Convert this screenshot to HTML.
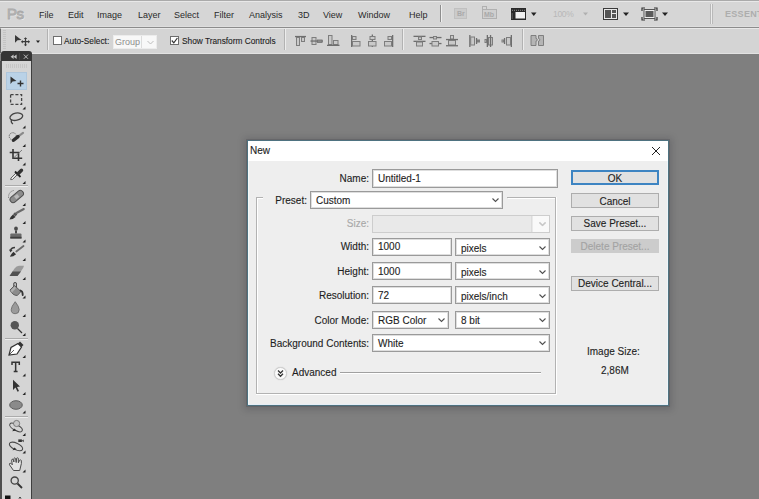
<!DOCTYPE html>
<html><head><meta charset="utf-8">
<style>
*{margin:0;padding:0;box-sizing:border-box}
html,body{width:759px;height:499px;overflow:hidden;background:#7f7f7f;font-family:"Liberation Sans",sans-serif;position:relative}
.a{position:absolute}
.t{position:absolute;white-space:pre;line-height:1}
#menubar{left:0;top:0;width:759px;height:27px;background:#d6d6d6;border-top:1px solid #e9e9e9;border-bottom:1px solid #a0a0a0}
#optbar{left:0;top:27px;width:759px;height:24px;background:#d4d4d4;border-top:1px solid #e6e6e6;border-left:1px solid #8a8a8a}
.menu{font-size:9px;color:#2a2a2a;top:11px}
.dlgtxt{font-size:10px;color:#1e1e1e;-webkit-text-stroke:0.12px currentColor;transform:scaleY(1.1);transform-origin:0 0}
.field{position:absolute;background:#fff;border:1px solid #9a9a9a;box-shadow:inset 0 0 0 1px #dedede}
.sel{position:absolute;background:#fff;border:1px solid #9a9a9a;box-shadow:inset 0 0 0 1px #dedede}
.btn{position:absolute;background:#e1e1e1;border:1px solid #adadad;font-size:9.7px;color:#1a1a1a;text-align:center}
</style></head><body>

<!-- Menu bar -->
<div class="a" style="left:0;top:0;width:759px;height:28px;background:#d6d6d6;border-top:1px solid #aaaaaa;border-bottom:1px solid #8c8c8c"></div>
<div class="a" style="left:0;top:1px;width:759px;height:1px;background:#e8e8e8"></div>
<div class="a" style="left:0;top:26px;width:759px;height:1px;background:#dedede"></div>
<div class="t" style="left:7px;top:6px;font-size:15px;color:#c4c4c4;-webkit-text-stroke:0.9px #a9a9a9;text-shadow:1px 1px 0 #e8e8e8;letter-spacing:-0.5px">Ps</div>
<div class="t menu" style="left:39px">File</div>
<div class="t menu" style="left:68px">Edit</div>
<div class="t menu" style="left:97px">Image</div>
<div class="t menu" style="left:138px">Layer</div>
<div class="t menu" style="left:174px">Select</div>
<div class="t menu" style="left:214px">Filter</div>
<div class="t menu" style="left:249px">Analysis</div>
<div class="t menu" style="left:298px">3D</div>
<div class="t menu" style="left:323px">View</div>
<div class="t menu" style="left:358px">Window</div>
<div class="t menu" style="left:409px">Help</div>
<div class="a" style="left:440px;top:5px;width:1px;height:17px;background:#8e8e8e"></div>
<div class="a" style="left:441px;top:5px;width:1px;height:17px;background:#efefef"></div>
<!-- Br -->
<div class="a" style="left:454px;top:8px;width:13px;height:11px;background:#cbcbcb;border:1px solid #c0c0c0"></div>
<div class="t" style="left:457px;top:10px;font-size:7px;font-weight:bold;color:#a9a9a9">Br</div>
<!-- Mb -->
<div class="a" style="left:482px;top:9px;width:15px;height:10px;background:#cfcfcf;border:1px solid #b0b0b0"></div>
<div class="a" style="left:482px;top:6px;width:5px;height:4px;border:1px solid #b0b0b0;border-bottom:none"></div>
<div class="t" style="left:484px;top:11px;font-size:7px;font-weight:bold;color:#a9a9a9">Mb</div>
<!-- screen mode -->
<svg class="a" style="left:510px;top:7px" width="17" height="14">
<rect x="1" y="1" width="15" height="12" fill="#2a2a2a"/>
<rect x="5.5" y="5" width="9.5" height="6.5" fill="#f2f2f2"/>
<path d="M2 3.3 H15.5 M2.2 6.5 V11.5" stroke="#9a9a9a" stroke-width="0.9" stroke-dasharray="1 1"/>
</svg>
<svg class="a" style="left:0;top:0" width="759" height="28">
<path d="M531 12.5 h5.5 l-2.75 3.5z" fill="#222"/>
<path d="M583 12.5 h5 l-2.5 3z" fill="#b0b0b0"/>
<path d="M623 12.5 h6 l-3 3.5z" fill="#222"/>
<path d="M662 12.5 h6 l-3 3.5z" fill="#222"/>
</svg>
<div class="t" style="left:553px;top:10px;font-size:8.5px;color:#b8b8b8;letter-spacing:-0.3px">100%</div>
<!-- arrange docs -->
<div class="a" style="left:603px;top:8px;width:15px;height:12px;background:#e8e8e8;border:1px solid #3a3a3a"></div>
<div class="a" style="left:605px;top:10px;width:6px;height:8px;background:#555"></div>
<div class="a" style="left:612px;top:10px;width:4px;height:3px;background:#555"></div>
<div class="a" style="left:612px;top:14px;width:4px;height:4px;background:#555"></div>
<!-- screen -->
<svg class="a" style="left:641px;top:7px" width="17" height="14">
<rect x="3" y="2.5" width="11" height="9" fill="#ededed" stroke="#555" stroke-width="1"/>
<rect x="4.5" y="4" width="8" height="6" fill="#5a5a5a"/>
<path d="M1 4 V1 H4 M13 1 H16 V4 M16 10 V13 H13 M4 13 H1 V10" fill="none" stroke="#333" stroke-width="1.2"/>
</svg>
<div class="a" style="left:710px;top:4px;width:1px;height:20px;background:#b9b9b9"></div>
<div class="a" style="left:712px;top:4px;width:1px;height:20px;background:#b9b9b9"></div>
<div class="a" style="left:711px;top:4px;width:1px;height:20px;background:#ececec"></div>
<div class="t" style="left:725px;top:10px;font-size:9px;font-weight:bold;color:#adadad;letter-spacing:0.3px">ESSENTIALS</div>

<!-- Options bar -->
<div class="a" style="left:0;top:28px;width:759px;height:26px;background:#d4d4d4;border-top:1px solid #e8e8e8;border-left:1px solid #6a6a6a;border-bottom:1px solid #e2e2e2"></div>
<div class="a" style="left:3px;top:30px;width:3px;height:20px;background:repeating-linear-gradient(#c4c4c4 0 1px,transparent 1px 2px)"></div>
<svg class="a" style="left:0;top:28px" width="759" height="23">
<path d="M15 7 L21.5 12 L17.5 12.3 L15 14.8z" fill="#3a3a3a"/>
<path d="M25.5 10 v7.5 M21.8 13.7 h7.4" stroke="#3a3a3a" stroke-width="1.2"/>
<path d="M23.8 11 l1.7 -1.8 l1.7 1.8z M23.8 16.4 l1.7 1.8 l1.7 -1.8z M22.8 12 l-1.8 1.7 l1.8 1.7z M28.2 12 l1.8 1.7 l-1.8 1.7z" fill="#3a3a3a"/>
<path d="M36 12.5 h4 l-2 2.5z" fill="#222"/>
<!-- align icons -->
<rect x="295" y="7.9" width="11" height="1.3" fill="#6e6e6e"/>
<rect x="296.5" y="9.5" width="3" height="8" fill="#c9c9c9" stroke="#7d7d7d" stroke-width="1"/>
<rect x="301.5" y="9.5" width="3" height="4" fill="#c9c9c9" stroke="#7d7d7d" stroke-width="1"/>
<rect x="312.0" y="9.5" width="4.0" height="7" fill="#c9c9c9" stroke="#7d7d7d" stroke-width="1"/>
<rect x="317.5" y="12.0" width="4.5" height="2.5" fill="#c9c9c9" stroke="#7d7d7d" stroke-width="1"/>
<rect x="310.5" y="12.4" width="12.5" height="1.3" fill="#6e6e6e"/>
<rect x="328.5" y="7.5" width="3.5" height="9" fill="#c9c9c9" stroke="#7d7d7d" stroke-width="1"/>
<rect x="333.5" y="12.5" width="4.5" height="4" fill="#c9c9c9" stroke="#7d7d7d" stroke-width="1"/>
<rect x="327" y="16.699999999999996" width="12.5" height="1.3" fill="#6e6e6e"/>
<rect x="351.0" y="7" width="1.3" height="12" fill="#6e6e6e"/>
<rect x="352.5" y="8.5" width="3.5" height="3" fill="#c9c9c9" stroke="#7d7d7d" stroke-width="1"/>
<rect x="352.5" y="13.5" width="7.5" height="4.5" fill="#c9c9c9" stroke="#7d7d7d" stroke-width="1"/>
<rect x="371.7" y="6.5" width="1.3" height="12.5" fill="#6e6e6e"/>
<rect x="370.0" y="8.5" width="5.0" height="3" fill="#c9c9c9" stroke="#7d7d7d" stroke-width="1"/>
<rect x="368.5" y="13.5" width="7.5" height="4.5" fill="#c9c9c9" stroke="#7d7d7d" stroke-width="1"/>
<rect x="392.0" y="7" width="1.3" height="12" fill="#6e6e6e"/>
<rect x="388.0" y="8.5" width="3.5" height="3" fill="#c9c9c9" stroke="#7d7d7d" stroke-width="1"/>
<rect x="384.5" y="13.5" width="7" height="4.5" fill="#c9c9c9" stroke="#7d7d7d" stroke-width="1"/>
<rect x="413.5" y="7.6999999999999975" width="12.0" height="1.3" fill="#6e6e6e"/>
<rect x="418.5" y="9.0" width="3" height="2.5" fill="#c9c9c9" stroke="#7d7d7d" stroke-width="1"/>
<rect x="413.5" y="12.699999999999998" width="12.0" height="1.3" fill="#6e6e6e"/>
<rect x="416.5" y="14.0" width="6" height="4.0" fill="#c9c9c9" stroke="#7d7d7d" stroke-width="1"/>
<rect x="429.5" y="8.9" width="12.0" height="1.3" fill="#6e6e6e"/>
<rect x="433.5" y="8.5" width="3" height="2.5" fill="#c9c9c9" stroke="#7d7d7d" stroke-width="1"/>
<rect x="429.5" y="14.9" width="12.0" height="1.3" fill="#6e6e6e"/>
<rect x="432.0" y="13.5" width="6.5" height="4.5" fill="#c9c9c9" stroke="#7d7d7d" stroke-width="1"/>
<rect x="450.5" y="7.5" width="3" height="3.5" fill="#c9c9c9" stroke="#7d7d7d" stroke-width="1"/>
<rect x="446" y="10.9" width="12" height="1.3" fill="#6e6e6e"/>
<rect x="448.5" y="12.5" width="7" height="4.5" fill="#c9c9c9" stroke="#7d7d7d" stroke-width="1"/>
<rect x="446" y="17.1" width="12" height="1.3" fill="#6e6e6e"/>
<rect x="469.2" y="7" width="1.3" height="12" fill="#6e6e6e"/>
<rect x="470.7" y="9.0" width="3.8000000000000114" height="8.0" fill="#c9c9c9" stroke="#7d7d7d" stroke-width="1"/>
<rect x="475.9" y="10" width="1.3" height="6" fill="#6e6e6e"/>
<rect x="477.5" y="12.0" width="2" height="2.0" fill="#c9c9c9" stroke="#7d7d7d" stroke-width="1"/>
<rect x="486.7" y="7" width="1.3" height="12" fill="#6e6e6e"/>
<rect x="485.0" y="11.5" width="1.5" height="3" fill="#c9c9c9" stroke="#7d7d7d" stroke-width="1"/>
<rect x="488.5" y="9.5" width="4" height="7.5" fill="#c9c9c9" stroke="#7d7d7d" stroke-width="1"/>
<rect x="489.9" y="7" width="1.3" height="12" fill="#6e6e6e"/>
<rect x="510.7" y="7" width="1.3" height="12" fill="#6e6e6e"/>
<rect x="506.5" y="9.5" width="4" height="7.5" fill="#c9c9c9" stroke="#7d7d7d" stroke-width="1"/>
<rect x="503.9" y="10" width="1.3" height="6" fill="#6e6e6e"/>
<rect x="502.0" y="12.0" width="1.5" height="2.0" fill="#c9c9c9" stroke="#7d7d7d" stroke-width="1"/>
<path d="M531 7.5 h5 v3 a1.3 1.3 0 0 1 0 2.6 v4.4 h-5z M538.5 7.5 h5 v10 h-5 v-4.4 a1.3 1.3 0 0 0 0 -2.6z" fill="#b5b5b5" stroke="#777" stroke-width="0.9"/>
</svg>
<div class="a" style="left:47px;top:29px;width:1px;height:21px;background:#b2b2b2"></div>
<div class="a" style="left:48px;top:29px;width:1px;height:21px;background:#ececec"></div>
<div class="a" style="left:284px;top:29px;width:1px;height:21px;background:#b2b2b2"></div>
<div class="a" style="left:285px;top:29px;width:1px;height:21px;background:#ececec"></div>
<div class="a" style="left:402px;top:29px;width:1px;height:21px;background:#b2b2b2"></div>
<div class="a" style="left:403px;top:29px;width:1px;height:21px;background:#ececec"></div>
<div class="a" style="left:522px;top:29px;width:1px;height:21px;background:#b2b2b2"></div>
<div class="a" style="left:523px;top:29px;width:1px;height:21px;background:#ececec"></div>
<!-- checkbox 1 -->
<div class="a" style="left:53px;top:36px;width:9px;height:9px;background:#fff;border:1px solid #6e6e6e"></div>
<div class="t" style="left:64px;top:36px;font-size:8.3px;color:#1e1e1e;transform:scaleY(1.12);transform-origin:0 0;-webkit-text-stroke:0.1px currentColor">Auto-Select:</div>
<div class="a" style="left:113px;top:35px;width:44px;height:14px;background:#f8f8f8;border:1px solid #ececec"></div>
<div class="a" style="left:141px;top:36px;width:1px;height:12px;background:#dcdcdc"></div>
<div class="t" style="left:115px;top:37.5px;font-size:9px;color:#8c8c8c;letter-spacing:0px">Group</div>
<svg class="a" style="left:145px;top:38px" width="10" height="8"><path d="M2.5 3 l3 3 l3 -3" fill="none" stroke="#bdbdbd" stroke-width="1"/></svg>
<!-- checkbox 2 -->
<div class="a" style="left:170px;top:36px;width:9px;height:9px;background:#fff;border:1px solid #6e6e6e"></div>
<svg class="a" style="left:170px;top:36px" width="9" height="9"><path d="M1.8 4.5 l2 2.3 l3.6 -4.8" fill="none" stroke="#333" stroke-width="1.2"/></svg>
<div class="t" style="left:182px;top:36px;font-size:8.3px;color:#1e1e1e;transform:scaleY(1.12);transform-origin:0 0;-webkit-text-stroke:0.1px currentColor">Show Transform Controls</div>

<!-- toolbox -->
<div class="a" style="left:1px;top:51px;width:31px;height:10px;background:#353535;border-radius:3px 3px 0 0"></div>
<div class="a" style="left:0;top:61px;width:32px;height:438px;background:#d5d5d5;border-left:2px solid #4e4e4e;border-right:1px solid #3e3e3e"></div>
<div class="a" style="left:6px;top:64px;width:22px;height:4px;background:repeating-linear-gradient(90deg,#c6c6c6 0 1px,transparent 1px 2px)"></div>
<div class="a" style="left:6px;top:72px;width:21px;height:18px;background:#bad2e7;box-shadow:inset 0 0 0 1px #aec6dc"></div>
<svg class="a" style="left:0;top:48px" width="32" height="20">
<path d="M13.6 6.5 l-3 2.2 l3 2.2z M16.6 6.5 l-3 2.2 l3 2.2z" fill="#c4c4c4"/>
<path d="M23.8 6.6 l4.2 4.2 M28 6.6 l-4.2 4.2" stroke="#bdbdbd" stroke-width="1"/>
<rect x="19" y="5" width="1" height="7" fill="#444"/>
</svg>
<svg class="a" style="left:0;top:0" width="32" height="499">
<g fill="#222"><path d="M22.5 109.5 L25.5 106.5 L25.5 109.5z"/><path d="M22.5 128.5 L25.5 125.5 L25.5 128.5z"/><path d="M22.5 147.0 L25.5 144.0 L25.5 147.0z"/><path d="M22.5 165.5 L25.5 162.5 L25.5 165.5z"/><path d="M22.5 184.0 L25.5 181.0 L25.5 184.0z"/><path d="M22.5 206.0 L25.5 203.0 L25.5 206.0z"/><path d="M22.5 224.0 L25.5 221.0 L25.5 224.0z"/><path d="M22.5 242.5 L25.5 239.5 L25.5 242.5z"/><path d="M22.5 261.0 L25.5 258.0 L25.5 261.0z"/><path d="M22.5 280.0 L25.5 277.0 L25.5 280.0z"/><path d="M22.5 298.5 L25.5 295.5 L25.5 298.5z"/><path d="M22.5 317.0 L25.5 314.0 L25.5 317.0z"/><path d="M22.5 336.0 L25.5 333.0 L25.5 336.0z"/><path d="M22.5 358.0 L25.5 355.0 L25.5 358.0z"/><path d="M22.5 376.5 L25.5 373.5 L25.5 376.5z"/><path d="M22.5 395.0 L25.5 392.0 L25.5 395.0z"/><path d="M22.5 413.5 L25.5 410.5 L25.5 413.5z"/><path d="M22.5 436.0 L25.5 433.0 L25.5 436.0z"/><path d="M22.5 453.5 L25.5 450.5 L25.5 453.5z"/><path d="M22.5 472.5 L25.5 469.5 L25.5 472.5z"/></g>
<!-- move -->
<path d="M10.5 76.5 L16.5 81 L12.5 81.5 L10.5 84z" fill="#333"/>
<path d="M20.5 80.5 v6 M17.5 83.5 h6" stroke="#333" stroke-width="1.4"/>
<!-- marquee -->
<rect x="10.6" y="94.6" width="11" height="9.8" fill="none" stroke="#444" stroke-width="1.3" stroke-dasharray="3 1.8"/>
<!-- lasso -->
<ellipse cx="16.3" cy="116.7" rx="6.5" ry="3.6" transform="rotate(-12 16.3 116.7)" fill="none" stroke="#444" stroke-width="1.3"/>
<path d="M11.5 119.5 q-1 3 1.5 4.5" fill="none" stroke="#444" stroke-width="1.3"/>
<!-- quick selection -->
<circle cx="12.8" cy="136.3" r="3.6" fill="none" stroke="#666" stroke-width="1" stroke-dasharray="1.4 0.9"/>
<path d="M17.5 137 L23 132.8" stroke="#8a8a8a" stroke-width="2.2" stroke-linecap="round"/>
<path d="M13.5 140.3 L18 136.6" stroke="#2e2e2e" stroke-width="3.4" stroke-linecap="round"/>
<!-- crop -->
<path d="M9.7 152.5 H18.5 V161 M13 149 V158.3 H22.2" fill="none" stroke="#333" stroke-width="1.6"/>
<path d="M13.5 158 L22 150" stroke="#666" stroke-width="0.8"/>
<!-- eyedropper -->
<path d="M10.6 179.6 L11 178 L16.5 172.5 L18 174 L12.5 179.5z" fill="#e6e6e6" stroke="#555" stroke-width="0.9"/>
<path d="M15 171.5 L20.5 177" stroke="#222" stroke-width="1.8"/>
<path d="M18 173.8 L21.5 170.3" stroke="#333" stroke-width="3.4" stroke-linecap="round"/>
<!-- separator -->
<rect x="5" y="185" width="23" height="1" fill="#ababab"/><rect x="5" y="186" width="23" height="1" fill="#eeeeee"/>
<!-- healing -->
<path d="M8.6 198 q-0.5 -6 5 -7.5" fill="none" stroke="#666" stroke-width="0.9" stroke-dasharray="1.2 1"/>
<rect x="9" y="193.5" width="15.5" height="6.2" rx="3.1" transform="rotate(-40 16.7 196.6)" fill="#8c8c8c" stroke="#4e4e4e" stroke-width="1"/>
<rect x="14.7" y="194.8" width="4" height="3.6" transform="rotate(-40 16.7 196.6)" fill="#b9b9b9"/>
<!-- brush -->
<path d="M9.5 219.5 q1 -3 3.5 -5 l2.5 2.5 q-2.5 2.5 -6 2.5z" fill="#333"/>
<path d="M13 214.3 l2 -2 l2.3 2.3 l-2 2z" fill="#555"/>
<path d="M16.5 213 L23.8 209" stroke="#6a6a6a" stroke-width="2" stroke-linecap="round"/>
<!-- stamp -->
<ellipse cx="16" cy="228.7" rx="1.9" ry="2.1" fill="#4a4a4a"/>
<rect x="15" y="230.5" width="2" height="3" fill="#4a4a4a"/>
<path d="M10.3 238.5 V234.5 q0 -1 1 -1 H20.5 q1 0 1 1 V238.5z" fill="#6a6a6a"/>
<rect x="10.3" y="236.8" width="11.2" height="1.7" fill="#3e3e3e"/>
<!-- history brush -->
<path d="M10 256.8 q1 -3 3.5 -5 l2.5 2.5 q-2.5 2.5 -6 2.5z" fill="#333"/>
<path d="M16.3 251.5 L23.5 246" stroke="#6a6a6a" stroke-width="1.8" stroke-linecap="round"/>
<path d="M10.5 251 q0.5 -3.5 4.5 -3.5" fill="none" stroke="#3a3a3a" stroke-width="1.5"/>
<path d="M9 249.5 l1.5 3 l2 -2.5z" fill="#3a3a3a"/>
<!-- eraser -->
<path d="M9.6 276 L14.5 268.5 Q16.5 265.8 19 265.8 L24 265.8 Q23.5 268 21.5 270.5 L17.5 276z" fill="#9a9a9a"/>
<path d="M9.6 276 L12.5 271.5 L21 271.5 L17.5 276z" fill="#505050"/>
<!-- bucket -->
<path d="M13.8 288 V283.5 q1.2 -2 2.6 0 V288" fill="none" stroke="#4a4a4a" stroke-width="1.1"/>
<path d="M10 290 L14.5 285.5 L21 291.5 L17.3 295.5 Q12.5 295.5 10 290z" fill="#8c8c8c" stroke="#555" stroke-width="0.9"/>
<path d="M10.5 290.5 L14.5 286.5 L16 288 L12 292.5z" fill="#b0b0b0"/>
<path d="M20.5 290.5 q2.4 0.8 2.2 4.5" fill="none" stroke="#333" stroke-width="1.8" stroke-linecap="round"/>
<!-- blur -->
<path d="M15.2 301.7 q-4 5 -4 8 a4 4 0 0 0 8 0 q0 -3 -4 -8z" fill="#9a9a9a" stroke="#666" stroke-width="0.8"/>
<!-- dodge -->
<circle cx="14.8" cy="325.3" r="4.2" fill="#555"/>
<path d="M17.5 328.5 L22 333" stroke="#333" stroke-width="1.3"/>
<!-- separator -->
<rect x="5" y="338" width="23" height="1" fill="#ababab"/><rect x="5" y="339" width="23" height="1" fill="#eeeeee"/>
<!-- pen -->
<path d="M9 355 L11 347.5 L18 343.5 L21.5 347 L17 354z" fill="#fff" stroke="#333" stroke-width="1.2"/>
<path d="M18 343.5 L20 341.5 L23.5 345 L21.5 347z" fill="#333"/>
<path d="M9 355 L14 350" stroke="#333" stroke-width="0.8"/>
<!-- T -->
<path d="M12 365 V362.3 H19.3 V365 M15.65 362.3 V371.5 M13.7 371.5 H17.6" fill="none" stroke="#333" stroke-width="1.5"/>
<!-- arrow -->
<path d="M13 379.7 L20 386.5 L17 387 L19 391 L17.5 391.7 L15.5 387.6 L13 390z" fill="#333"/>
<!-- ellipse -->
<ellipse cx="16" cy="405" rx="6.3" ry="4.3" fill="#8a8a8a" stroke="#555" stroke-width="0.9"/>
<!-- separator -->
<rect x="5" y="416" width="23" height="1" fill="#ababab"/><rect x="5" y="417" width="23" height="1" fill="#eeeeee"/>
<!-- 3d rotate -->
<ellipse cx="16" cy="427.5" rx="7" ry="2.9" transform="rotate(28 16 427.5)" fill="none" stroke="#4a4a4a" stroke-width="1.05"/>
<circle cx="16.6" cy="423.5" r="3.1" fill="#c6c6c6" stroke="#666" stroke-width="0.8"/>
<path d="M12.2 431.2 L16.5 430.6 L14.2 428.5z" fill="#2e2e2e"/>
<!-- 3d camera -->
<rect x="18.3" y="439.4" width="3.6" height="2.6" fill="#333"/><path d="M21.8 440.7 l1.9 -1.3 v2.8z" fill="#333"/>
<ellipse cx="16" cy="446.4" rx="7.2" ry="3.3" transform="rotate(25 16 446.4)" fill="none" stroke="#4a4a4a" stroke-width="1.05"/>
<path d="M12.5 450.2 L16.8 449.6 L14.4 447.6z" fill="#2e2e2e"/>
<!-- hand -->
<path d="M13.5 470.5 L9.5 464.8 Q9 463 10.7 463.2 L12.3 464.8 L11.6 460.2 Q11.9 458.8 13 459.2 L13.9 462 L13.9 458.5 Q14.7 457.2 15.6 458.5 L16.2 462.5 L16.6 458.3 Q17.4 457.3 18.3 458.3 L18.4 462.8 L19.5 460.3 Q20.4 459.4 21.3 460.4 L21.4 463.5 L19.7 470.5 Z" fill="#e2e2e2" stroke="#4a4a4a" stroke-width="1"/>
<!-- zoom -->
<circle cx="14.7" cy="480.6" r="3.6" fill="none" stroke="#444" stroke-width="1.3"/>
<path d="M17.5 483.5 L22 488" stroke="#333" stroke-width="1.8"/>
<!-- colors -->
<rect x="5" y="495.5" width="5.5" height="4" fill="#111"/>
<path d="M20 497 v3 M20 497 l-1.3 1.3 M20 497 l1.3 1.3" stroke="#444" stroke-width="0.9"/>
</svg>

<!-- Dialog -->
<div class="a" style="left:247px;top:140px;width:422px;height:266px;background:#eeeeee;border:1px solid #4e7280;box-shadow:0 0 0 1px rgba(60,60,70,0.22),0 1px 7px 3px rgba(20,20,30,0.17)"></div>
<div class="a" style="left:248px;top:141px;width:1px;height:264px;background:#f2f9fa"></div>
<div class="a" style="left:667px;top:141px;width:1px;height:264px;background:#eef6fa"></div>
<div class="a" style="left:248px;top:404px;width:420px;height:1px;background:#e6eef6"></div>
<div class="a" style="left:248px;top:141px;width:420px;height:20px;background:#fff"></div>
<div class="t dlgtxt" style="left:250px;top:145px">New</div>

<div class="t dlgtxt" style="right:390px;top:173px">Name:</div>
<div class="field" style="left:372px;top:169px;width:186px;height:19px"></div>
<div class="t dlgtxt" style="left:378px;top:173px">Untitled-1</div>

<div class="t dlgtxt" style="right:452px;top:195px">Preset:</div>
<div class="sel" style="left:310px;top:191px;width:193px;height:18px"></div>
<div class="t dlgtxt" style="left:316px;top:195px">Custom</div>

<div class="t dlgtxt" style="right:390px;top:218px;color:#a8a8a8">Size:</div>
<div class="a" style="left:372px;top:215px;width:178px;height:18px;background:#e9e9e9;border:1px solid #cdcdcd"></div>
<div class="a" style="left:531px;top:216px;width:1px;height:16px;background:#dcdcdc"></div>
<div class="a" style="left:533px;top:216px;width:16px;height:16px;background:#f9f9f9"></div>
<svg class="a" style="left:533px;top:216px" width="16" height="16"><path d="M6.5 6.5 l3 3 l3 -3" fill="none" stroke="#c4c4c4" stroke-width="1.1"/></svg>

<div class="t dlgtxt" style="right:390px;top:241px">Width:</div>
<div class="field" style="left:372px;top:238px;width:80px;height:18px"></div>
<div class="t dlgtxt" style="left:378px;top:241px">1000</div>
<div class="sel" style="left:455px;top:238px;width:95px;height:18px"></div>
<div class="t dlgtxt" style="left:461px;top:243px">pixels</div>

<div class="t dlgtxt" style="right:390px;top:266px">Height:</div>
<div class="field" style="left:372px;top:262px;width:80px;height:18px"></div>
<div class="t dlgtxt" style="left:378px;top:266px">1000</div>
<div class="sel" style="left:455px;top:262px;width:95px;height:18px"></div>
<div class="t dlgtxt" style="left:461px;top:267px">pixels</div>

<div class="t dlgtxt" style="right:390px;top:290px">Resolution:</div>
<div class="field" style="left:372px;top:286px;width:80px;height:18px"></div>
<div class="t dlgtxt" style="left:378px;top:290px">72</div>
<div class="sel" style="left:455px;top:286px;width:95px;height:18px"></div>
<div class="t dlgtxt" style="left:461px;top:291px">pixels/inch</div>

<div class="t dlgtxt" style="right:390px;top:315px">Color Mode:</div>
<div class="sel" style="left:372px;top:311px;width:77px;height:18px"></div>
<div class="t dlgtxt" style="left:378px;top:315px">RGB Color</div>
<div class="sel" style="left:455px;top:311px;width:95px;height:18px"></div>
<div class="t dlgtxt" style="left:461px;top:315px">8 bit</div>

<div class="t dlgtxt" style="right:390px;top:338px">Background Contents:</div>
<div class="sel" style="left:372px;top:334px;width:178px;height:18px"></div>
<div class="t dlgtxt" style="left:378px;top:338px">White</div>

<div class="t dlgtxt" style="left:292px;top:367px">Advanced</div>

<div class="btn" style="left:571px;top:170px;width:88px;height:15px;border:2px solid #3d84c2"></div>
<div class="btn" style="left:571px;top:193px;width:88px;height:15px"></div>
<div class="btn" style="left:571px;top:216px;width:88px;height:15px"></div>
<div class="btn" style="left:571px;top:239px;width:88px;height:14px;background:#cccccc;border-color:#cccccc"></div>
<div class="btn" style="left:571px;top:276px;width:88px;height:15px"></div>
<div class="t dlgtxt" style="left:571px;width:88px;text-align:center;top:173px">OK</div>
<div class="t dlgtxt" style="left:571px;width:88px;text-align:center;top:196px">Cancel</div>
<div class="t dlgtxt" style="left:571px;width:88px;text-align:center;top:218px">Save Preset...</div>
<div class="t dlgtxt" style="left:571px;width:88px;text-align:center;top:241px;color:#a3a3a3">Delete Preset...</div>
<div class="t dlgtxt" style="left:571px;width:88px;text-align:center;top:278px">Device Central...</div>
<div class="t dlgtxt" style="left:587px;top:346px">Image Size:</div>
<div class="t dlgtxt" style="left:601px;top:365px">2,86M</div>


<!-- fieldset -->
<div class="a" style="left:256px;top:197px;width:7px;height:1px;background:#b2b2b2"></div>
<div class="a" style="left:507px;top:197px;width:49px;height:1px;background:#b2b2b2"></div>
<div class="a" style="left:256px;top:197px;width:1px;height:197px;background:#b2b2b2"></div>
<div class="a" style="left:555px;top:197px;width:1px;height:197px;background:#b2b2b2"></div>
<div class="a" style="left:256px;top:393px;width:300px;height:1px;background:#b2b2b2"></div>
<div class="a" style="left:257px;top:198px;width:6px;height:1px;background:#fff"></div>
<div class="a" style="left:508px;top:198px;width:47px;height:1px;background:#fff"></div>
<div class="a" style="left:257px;top:198px;width:1px;height:195px;background:#fff"></div>
<div class="a" style="left:556px;top:197px;width:1px;height:198px;background:#fff"></div>
<div class="a" style="left:256px;top:394px;width:301px;height:1px;background:#fff"></div>

<!-- dropdown arrows -->
<svg class="a" style="left:0;top:0" width="759" height="499">
<g fill="none" stroke="#505050" stroke-width="1.1">
<path d="M492.5 198.5 l3 3 l3 -3"/>
<path d="M539.5 246.5 l3 3 l3 -3"/>
<path d="M539.5 270.5 l3 3 l3 -3"/>
<path d="M539.5 294.5 l3 3 l3 -3"/>
<path d="M539.5 318.5 l3 3 l3 -3"/>
<path d="M539.5 341.5 l3 3 l3 -3"/>
<path d="M438.5 318.5 l3 3 l3 -3"/>
</g>
<path d="M539.5 222.5 l3 3 l3 -3" fill="none" stroke="#c8c8c8" stroke-width="1.1"/>
<path d="M652 147 L660 155 M660 147 L652 155" stroke="#222" stroke-width="1"/>
</svg>


<!-- advanced -->
<div class="a" style="left:274px;top:367px;width:13px;height:13px;border-radius:50%;background:#fafafa;border:1px solid #d0d0d0;box-shadow:0 0 1px #bbb"></div>
<svg class="a" style="left:274px;top:367px" width="13" height="13"><g fill="none" stroke="#333" stroke-width="1.3"><path d="M4 3.5 l2.5 2.5 l2.5 -2.5"/><path d="M4 6.8 l2.5 2.5 l2.5 -2.5"/></g></svg>
<div class="a" style="left:340px;top:372px;width:201px;height:1px;background:#a0a0a0"></div>
<div class="a" style="left:340px;top:373px;width:201px;height:1px;background:#fff"></div>

</body></html>
